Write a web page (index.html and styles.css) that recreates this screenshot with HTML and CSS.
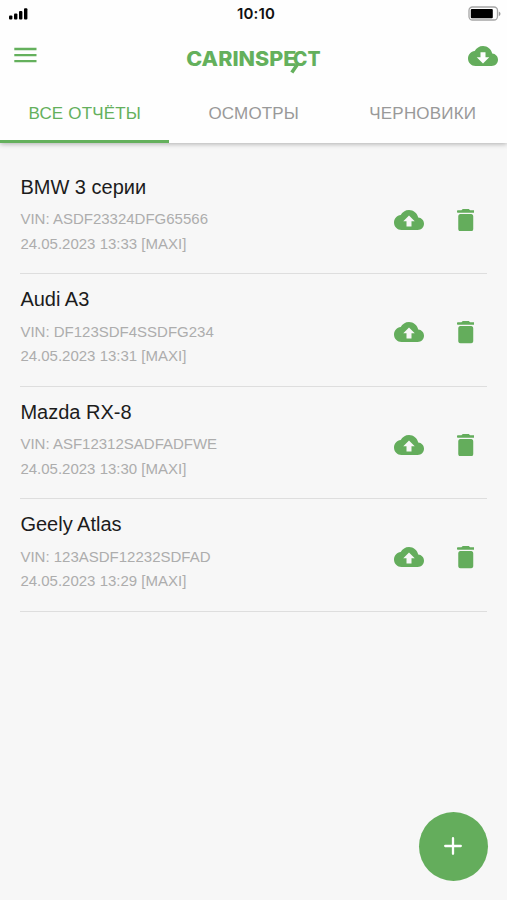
FILE: index.html
```html
<!DOCTYPE html>
<html lang="ru">
<head>
<meta charset="utf-8">
<title>CarInspect</title>
<link rel="stylesheet" href="styles.css">
</head>
<body>
<svg class="defs" width="0" height="0">
  <symbol id="upload" viewBox="0 4 24 16"><path fill-rule="evenodd" d="M19.35 10.04C18.67 6.59 15.64 4 12 4 9.11 4 6.6 5.64 5.35 8.04 2.34 8.36 0 10.91 0 14c0 3.31 2.69 6 6 6h13c2.76 0 5-2.24 5-5 0-2.64-2.05-4.78-4.65-4.96zM14 13v4.2h-4V13H7.4L12 8.3l4.6 4.7z"/></symbol>
  <symbol id="download" viewBox="0 4 24 16"><path fill-rule="evenodd" d="M19.35 10.04C18.67 6.59 15.64 4 12 4 9.11 4 6.6 5.64 5.35 8.04 2.34 8.36 0 10.91 0 14c0 3.31 2.69 6 6 6h13c2.76 0 5-2.24 5-5 0-2.64-2.05-4.78-4.65-4.96zM17 13l-5 5-5-5h3V9h4v4z"/></symbol>
  <symbol id="trash" viewBox="5 3 14 18"><path d="M6 19c0 1.1.9 2 2 2h8c1.1 0 2-.9 2-2V9c0-1.1-.7-2-1.6-2H7.6C6.7 7 6 7.9 6 9zM18.3 4H15.5l-.7-.7c-.2-.2-.5-.3-.7-.3H9.9c-.2 0-.5.1-.7.3l-.7.7H5.7C5.3 4 5 4.4 5 5s.3 1 .7 1h12.6c.4 0 .7-.4.7-1s-.3-1-.7-1z"/></symbol>
</svg>
<header class="header">
  <div class="status">
    <svg class="signal" viewBox="0 0 19 12"><rect x="0" y="7.5" width="3.4" height="4" rx="1"/><rect x="5" y="5.5" width="3.4" height="6" rx="1"/><rect x="10" y="3" width="3.4" height="8.5" rx="1"/><rect x="15" y="0.3" width="3.4" height="11.2" rx="1"/></svg>
    <span class="time">10:10</span>
    <svg class="battery" viewBox="0 0 33 15"><rect x="1" y="1" width="28.5" height="13" rx="3.5" fill="none" stroke="#a5a5a5" stroke-width="1.3"/><rect x="2.8" y="3" width="22" height="9.3" rx="1"/><path d="M30.8 5.5c2.2.8 2.2 3.8 0 4.6z" fill="#999"/></svg>
  </div>
  <div class="bar">
    <svg class="menu" viewBox="0 0 23 16"><path d="M.3 2h22.2M.3 8.1h22.2M.3 14.2h22.2" stroke="#64b05c" stroke-width="2.3"/></svg>
    <svg class="logo" viewBox="0 0 136 32"><text x="0.3" y="20" textLength="110" lengthAdjust="spacingAndGlyphs">CARINSPE</text><text x="107" y="20" textLength="27.5" lengthAdjust="spacingAndGlyphs">CT</text><path d="M111.500 18.300l-5.700 8.300" stroke="#64b05c" stroke-width="3.6"/></svg>
    <svg class="cloud" viewBox="0 0 30 20"><use href="#download"/></svg>
  </div>
  <nav class="tabs">
    <span class="tab active">ВСЕ ОТЧЁТЫ</span>
    <span class="tab">ОСМОТРЫ</span>
    <span class="tab">ЧЕРНОВИКИ</span>
  </nav>
</header>
<main class="list">
  <article class="row">
    <div class="info"><h2>BMW 3 серии</h2><p>VIN: ASDF23324DFG65566</p><p>24.05.2023 13:33 [MAXI]</p></div>
    <div class="actions"><svg class="up"><use href="#upload"/></svg><svg class="del"><use href="#trash"/></svg></div>
  </article>
  <article class="row">
    <div class="info"><h2>Audi A3</h2><p>VIN: DF123SDF4SSDFG234</p><p>24.05.2023 13:31 [MAXI]</p></div>
    <div class="actions"><svg class="up"><use href="#upload"/></svg><svg class="del"><use href="#trash"/></svg></div>
  </article>
  <article class="row">
    <div class="info"><h2>Mazda RX-8</h2><p>VIN: ASF12312SADFADFWE</p><p>24.05.2023 13:30 [MAXI]</p></div>
    <div class="actions"><svg class="up"><use href="#upload"/></svg><svg class="del"><use href="#trash"/></svg></div>
  </article>
  <article class="row">
    <div class="info"><h2>Geely Atlas</h2><p>VIN: 123ASDF12232SDFAD</p><p>24.05.2023 13:29 [MAXI]</p></div>
    <div class="actions"><svg class="up"><use href="#upload"/></svg><svg class="del"><use href="#trash"/></svg></div>
  </article>
</main>
<button class="fab" aria-label="Добавить"><svg viewBox="0 0 18 18"><path d="M9 1.200v15.600M1.200 9h15.600" stroke="#fff" stroke-width="2.3" stroke-linecap="round"/></svg></button>
</body>
</html>
```
FILE: styles.css
```css
* { box-sizing: border-box; }
body {
  margin: 0;
  height: 900px;
  overflow: hidden;
  background: #f7f7f7;
  font-family: "Liberation Sans", Arial, sans-serif;
}
.defs { position: absolute; }
svg { display: block; }
.header {
  height: 143px;
  background: #fefefe;
  box-shadow: 0 1px 5px rgba(0, 0, 0, .3);
}
.status {
  height: 28px;
  padding: 0 6px 0 9px;
  display: grid;
  grid-template-columns: 1fr auto 1fr;
  align-items: center;
}
.signal { width: 19px; height: 12px; }
.time {
  margin-left: 2px;
  font: 600 15px/28px Inter, sans-serif;
  letter-spacing: .15px;
  color: #111;
}
.battery { width: 33px; height: 15px; justify-self: end; margin-top: -2px; }
.bar {
  height: 56px;
  padding: 0 9.5px 0 14px;
  display: grid;
  grid-template-columns: 1fr auto 1fr;
  align-items: center;
}
.menu { width: 23px; height: 16px; margin-top: -2px; }
.logo {
  width: 136px;
  height: 32px;
  margin: 11px 0 0 -3.5px;
  overflow: visible;
  fill: #64b05c;
  font: 800 20px Inter, sans-serif;
}
.cloud { width: 30px; height: 20px; fill: #64ad5c; justify-self: end; margin-top: -1px; }
.tabs { height: 59px; display: grid; grid-template-columns: repeat(3, 1fr); }
.tab {
  height: 59px;
  text-align: center;
  text-indent: .5px;
  font-size: 17px;
  letter-spacing: .18px;
  line-height: 59px;
  color: #999;
}
.active { color: #64b05c; border-bottom: 3px solid #64b05c; }
.list { padding: 18.6px 20px 0 20.4px; }
.row {
  height: 112.5px;
  padding-top: 13.2px;
  border-bottom: 1.5px solid #dedede;
  display: flex;
  justify-content: space-between;
}
h2 { margin: 0 0 8.5px; font-size: 20px; font-weight: 400; line-height: 24px; color: #1c1c1c; }
p { margin: 0; font-size: 15px; line-height: 24.5px; color: #adadad; }
.actions { display: flex; align-items: center; height: 90px; gap: 32.5px; padding-right: 13px; fill: #64ad5c; }
.up { width: 30px; height: 20px; }
.del { width: 17.5px; height: 22.5px; }
.fab {
  position: absolute;
  left: 418.5px;
  top: 811.5px;
  width: 69px;
  height: 69px;
  padding: 0;
  border: 0;
  border-radius: 50%;
  background: #64ad5c;
  display: grid;
  place-items: center;
}
.fab svg { width: 18px; height: 18px; }
```
